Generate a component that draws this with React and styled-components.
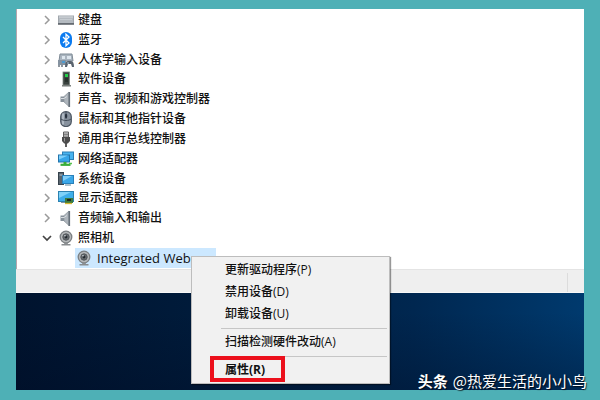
import React from 'react'
import styled, { createGlobalStyle, css } from 'styled-components';

const GlobalStyle = createGlobalStyle`
  * {
    box-sizing: border-box;
  }
  body {
    margin: 0;
    font-family: "Open Sans", "Noto Sans CJK SC", sans-serif;
    font-size: 12px;
    color: #111;
  }
  button {
    font: inherit;
    color: inherit;
    border: 0;
    padding: 0;
    background: none;
    text-align: left;
  }
`;

const Page = styled.div`
  position: relative;
  min-height: 100vh;
  padding: 9px 16px 10px;
  display: grid;
  background: #4eb0b6;
`;

const Desktop = styled.main`
  position: relative;
  display: grid;
  grid-template-rows: 1fr 24px 97px;
  background: #fff;
`;

const Tree = styled.ul`
  display: flex;
  flex-direction: column;
  margin: 0;
  padding: 1px 0;
  list-style: none;
  border-left: 1px solid #b5a5ac;
`;

const Row = styled.li`
  flex: 1;
  display: flex;
  align-items: center;
  padding-left: 24px;
  line-height: 18px;
`;

const Toggle = styled.button`
  display: flex;
  justify-content: center;
  width: 12px;
  margin-right: 5px;
`;

const Device = styled.span`
  display: flex;
  align-items: center;
  gap: 4px;
  white-space: nowrap;
  font-weight: 500;

  svg {
    flex: none;
  }

  ${(props) => props.$selected && css`
    width: 141px;
    margin-left: 34px;
    padding-left: 1px;
    gap: 5px;
    line-height: 20px;
    background: #cce8ff;
    font-weight: 400;
    font-size: 13px;
    overflow: hidden;
  `}
`;

const StatusBar = styled.div`
  background: #efefef;
  border-top: 1px solid #e4e4e4;
  border-bottom: 1px solid #f8f8f8;
  display: flex;
  justify-content: flex-end;
`;

const StatusCell = styled.div`
  width: 17px;
  margin-top: 3px;
  border-left: 1px solid #dcdcdc;
`;

const Wallpaper = styled.div`
  background:
    linear-gradient(to bottom, rgba(0, 12, 36, 0) 20%, rgba(0, 12, 36, 0.35)),
    linear-gradient(to right, #00132e, #001c3c 35%, #002750 70%, #003a6e);
`;

const Menu = styled.div`
  position: absolute;
  left: 175px;
  top: 247px;
  width: 199px;
  padding: 2px;
  background: #f1f1f1;
  border: 1px solid #bdbdbd;
  box-shadow: 1px 1px 1px rgba(0, 0, 0, 0.4);
`;

const MenuItem = styled.button`
  display: block;
  width: 100%;
  height: 22px;
  padding-left: 31px;
  line-height: 22px;
  font-weight: ${(props) => (props.$bold ? 700 : 500)};
`;

const Separator = styled.hr`
  margin: 3px 0 2px 27px;
  border: 0;
  height: 1px;
  background: #c6c6c6;
`;

const Highlight = styled.div`
  position: absolute;
  left: 18px;
  top: 99px;
  width: 75px;
  height: 26px;
  border: 4px solid #ec101c;
  pointer-events: none;
`;

const Watermark = styled.div`
  position: absolute;
  right: 13px;
  bottom: 8px;
  display: flex;
  gap: 5px;
  font-family: "Noto Sans CJK SC", sans-serif;
  font-size: 15px;
  line-height: 22px;
  color: #fff;
  text-shadow: 1px 1px 1px rgba(0, 0, 0, 0.7);
`;

const Icon = ({ children }) => (
  <svg width="16" height="16" viewBox="0 0 16 16" aria-hidden="true">{children}</svg>
)

const Chevron = ({ open }) => (
  <svg width="12" height="12" viewBox="0 0 12 12" fill="none" aria-hidden="true">
    {open
      ? <path d="M2 4l4 4 4-4" stroke="#444" strokeWidth="1.7" />
      : <path d="M4 2l4 4-4 4" stroke="#9a9a9a" strokeWidth="1.5" />}
  </svg>
)

const Keyboard = () => (
  <Icon>
    <rect x="0.5" y="4" width="15" height="7.5" fill="#b4bac0" stroke="#a0a6ac" />
    <path d="M1 5h14" stroke="#d5dade" />
    <path d="M2 7.5h12" stroke="#c6ccd1" />
    <path d="M0 12h16" stroke="#4c5259" strokeWidth="1.4" />
  </Icon>
)

const Bluetooth = () => (
  <Icon>
    <rect x="2" y="0" width="12" height="16" rx="6" fill="#0b7bf0" />
    <path d="M5 5l6 6-3 2.7V2.3L11 5l-6 6" fill="none" stroke="#fff" strokeWidth="1.3" />
  </Icon>
)

const Hid = () => (
  <Icon>
    <path d="M2 2h12l1 7H1z" fill="#a9b4bf" stroke="#7f8b96" />
    <path d="M4 4h3v3H4zM9 4h4v3H9z" fill="#dce6ee" />
    <rect x="0" y="8" width="8" height="5" fill="#8593a1" />
    <path d="M4 9h3v2H4z" fill="#4d9bd0" />
    <path d="M7 15c0-4 1-6 3-6h3c2 0 3 2 3 6h-2l-1-3h-3l-1 3z" fill="#59636e" />
    <path d="M1 13v2M4 13v2" stroke="#69747f" strokeWidth="1.5" />
    <circle cx="10" cy="11" r="0.8" fill="#b7d3e8" />
  </Icon>
)

const Software = () => (
  <Icon>
    <rect x="5" y="1" width="6.5" height="13" fill="#39423e" stroke="#7d8581" strokeWidth="0.8" />
    <rect x="7" y="3" width="3" height="3" fill="#24d04a" />
    <path d="M7 8h3M7 10h3" stroke="#16201b" />
    <path d="M4 14.8h9" stroke="#6f7572" strokeWidth="1.4" />
  </Icon>
)

const Speaker = () => (
  <Icon>
    <path d="M2.5 5.5H6v5.5H2.5z" fill="#87919a" />
    <path d="M6 5.5l5-4.5v14.5L6 11z" fill="#aeb5bc" stroke="#8a939b" strokeWidth="0.7" />
    <path d="M11.3 1v15" stroke="#66707a" strokeWidth="1.6" />
    <path d="M3 7.5h3l3-2" stroke="#d7dce0" strokeWidth="1" fill="none" />
  </Icon>
)

const Mouse = () => (
  <Icon>
    <rect x="2.7" y="0.7" width="10.6" height="14.8" rx="5" fill="#87919d" stroke="#4c5662" strokeWidth="1.2" />
    <path d="M5 2.5v11" stroke="#b9c2cc" strokeWidth="1.6" />
    <path d="M8 1v7M3 8c2 2 8 2 10 0" fill="none" stroke="#414b57" />
    <rect x="7" y="3" width="2.2" height="4" rx="1" fill="#27313d" />
  </Icon>
)

const Usb = () => (
  <Icon>
    <path d="M5.5 1h5v5h-5z" fill="#d4d4d4" stroke="#5d5d5d" />
    <path d="M7 2.5v2M9 2.5v2" stroke="#333" />
    <path d="M4 6h8v4l-2.2 2.5H6.2L4 10z" fill="#4b4b4b" />
    <path d="M6.5 7v3.5" stroke="#949494" />
    <path d="M8 12v4" stroke="#424242" strokeWidth="1.7" />
  </Icon>
)

const Network = () => (
  <Icon>
    <rect x="4.5" y="1" width="11" height="7.5" fill="#48b3ef" stroke="#2c7fb4" />
    <rect x="0.5" y="4" width="11" height="7" fill="#36a5e8" stroke="#2174ab" />
    <path d="M1 4.5h9L1 8.5z" fill="#7ed0fb" />
    <path d="M7 11v3" stroke="#39ad3a" strokeWidth="3" />
    <path d="M2.5 13.8h10" stroke="#39ad3a" strokeWidth="2.2" />
    <path d="M11 12.5h3" stroke="#55c34c" strokeWidth="1.5" />
  </Icon>
)

const System = () => (
  <Icon>
    <rect x="0.5" y="1.5" width="5" height="12" fill="#59656f" stroke="#36424c" />
    <path d="M1.5 4h3" stroke="#b9c8d2" />
    <rect x="4.5" y="4.5" width="11" height="8" fill="#3ba7e8" stroke="#2980ba" />
    <path d="M5 5h9l-9 5z" fill="#82cef7" />
    <path d="M7 14h6" stroke="#8aa8b8" strokeWidth="1.4" />
  </Icon>
)

const Display = () => (
  <Icon>
    <rect x="0.5" y="1.5" width="15" height="10" fill="#3eaee9" stroke="#2c82b1" />
    <path d="M1 2h12L1 8z" fill="#7fd2f8" />
    <rect x="7" y="8" width="8" height="5" fill="#3c7a3d" />
    <path d="M9 10h4" stroke="#20291e" strokeWidth="2" />
    <path d="M7 13.5h7" stroke="#d8b632" strokeWidth="1.3" />
    <path d="M3 12.5h4" stroke="#7b96a5" />
  </Icon>
)

const Camera = () => (
  <Icon>
    <circle cx="8" cy="7" r="5.8" fill="#b5b8ba" stroke="#7b7f82" strokeWidth="1.3" />
    <circle cx="8" cy="7" r="3.2" fill="#676c70" stroke="#52575b" />
    <circle cx="8" cy="7" r="1.4" fill="#252b30" />
    <circle cx="7" cy="5.7" r="0.8" fill="#d5dbe0" />
    <path d="M6.5 12.5h3l0.5 1.5h2.5v1.5h-9V14H6z" fill="#898d90" />
  </Icon>
)

const devices = [
  { name: '键盘', icon: Keyboard },
  { name: '蓝牙', icon: Bluetooth },
  { name: '人体学输入设备', icon: Hid },
  { name: '软件设备', icon: Software },
  { name: '声音、视频和游戏控制器', icon: Speaker },
  { name: '鼠标和其他指针设备', icon: Mouse },
  { name: '通用串行总线控制器', icon: Usb },
  { name: '网络适配器', icon: Network },
  { name: '系统设备', icon: System },
  { name: '显示适配器', icon: Display },
  { name: '音频输入和输出', icon: Speaker },
  { name: '照相机', icon: Camera, open: true },
]

const App = () => (
  <Page>
    <GlobalStyle />
    <Desktop>
      <Tree>
        {devices.map(({ name, icon: DeviceIcon, open }) => (
          <Row key={name}>
            <Toggle type="button" aria-label={name} aria-expanded={!!open}>
              <Chevron open={open} />
            </Toggle>
            <Device><DeviceIcon />{name}</Device>
          </Row>
        ))}
        <Row>
          <Device $selected><Camera />Integrated Webc</Device>
        </Row>
      </Tree>
      <StatusBar>
        <StatusCell />
      </StatusBar>
      <Wallpaper />

      <Menu role="menu">
        <MenuItem type="button" role="menuitem">更新驱动程序(P)</MenuItem>
        <MenuItem type="button" role="menuitem">禁用设备(D)</MenuItem>
        <MenuItem type="button" role="menuitem">卸载设备(U)</MenuItem>
        <Separator />
        <MenuItem type="button" role="menuitem">扫描检测硬件改动(A)</MenuItem>
        <Separator />
        <MenuItem type="button" role="menuitem" $bold>属性(R)</MenuItem>
        <Highlight />
      </Menu>
    </Desktop>
    <Watermark>
      <strong>头条</strong>
      <span>@热爱生活的小小鸟</span>
    </Watermark>
  </Page>
)

export default App
